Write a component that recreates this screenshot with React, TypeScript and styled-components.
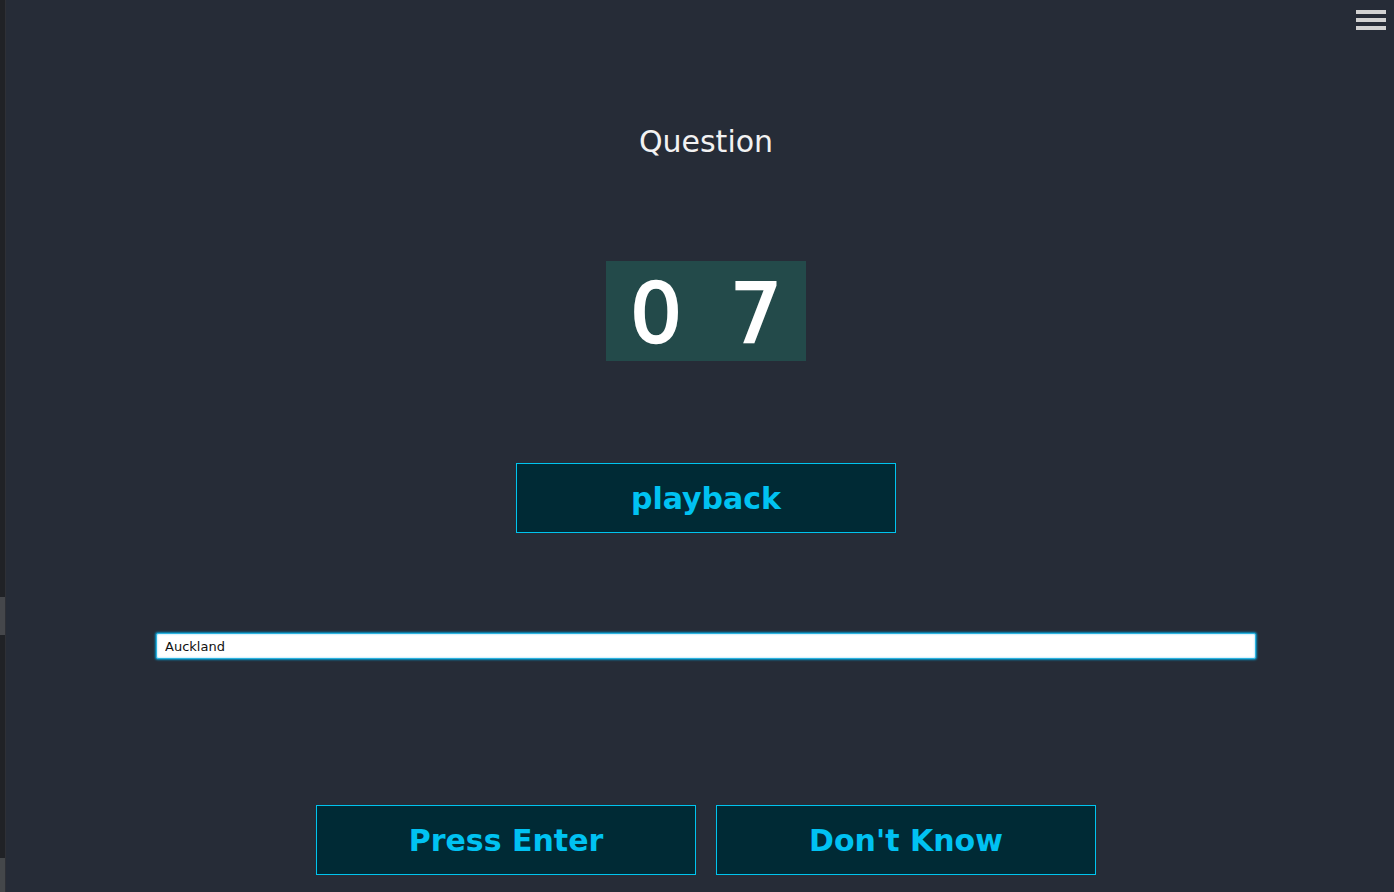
import React from "react";
import styled, { createGlobalStyle } from "styled-components";

const Global = createGlobalStyle`
  html, body { margin: 0; padding: 0; background: #262c37; }
  body { font-family: "DejaVu Sans", "Liberation Sans", sans-serif; overflow: hidden; }
`;

const Page = styled.div`
  display: flex;
  width: 1394px;
  height: 892px;
  background: #262c37;
  position: relative;
`;

const SideStrip = styled.div`
  width: 6px;
  flex: none;
  display: flex;
  flex-direction: column;
  background: #202226;
  border-right: 1px solid #2e3036;
  box-sizing: border-box;
`;

const StripSegment = styled.div<{ $h: number; $c: string }>`
  height: ${(p) => p.$h}px;
  flex: none;
  background: ${(p) => p.$c};
`;

const Main = styled.main`
  flex: 1;
  padding-left: 12px;
  display: flex;
  flex-direction: column;
  align-items: center;
`;

const Title = styled.h1`
  margin: 125px 0 0;
  font-size: 30px;
  font-weight: normal;
  line-height: 34px;
  color: #f2f2f2;
`;

const Counter = styled.div`
  margin-top: 102px;
  display: flex;
  background: #234a4a;
`;

const Digit = styled.span`
  width: 100px;
  height: 100px;
  box-sizing: border-box;
  padding-top: 6px;
  display: flex;
  align-items: center;
  justify-content: center;
  font-size: 82px;
  font-weight: normal;
  line-height: 1;
  color: #ffffff;
  -webkit-text-stroke: 2.5px #ffffff;
`;

const ActionButton = styled.button`
  width: 380px;
  height: 70px;
  box-sizing: border-box;
  background: #002a35;
  border: 1px solid #00c4ee;
  color: #00c2f2;
  font-family: "DejaVu Sans", sans-serif;
  font-weight: bold;
  font-size: 30px;
  padding: 0;
  cursor: pointer;
`;

const PlaybackButton = styled(ActionButton)`
  margin-top: 102px;
`;

const AnswerInput = styled.input`
  margin-top: 100px;
  width: 1100px;
  height: 26px;
  box-sizing: border-box;
  border: 1px solid #2bb3e0;
  border-radius: 2px;
  box-shadow: 0 0 2px 1px rgba(0, 170, 230, 0.8), inset 0 0 2px rgba(0, 160, 230, 0.5);
  background: #ffffff;
  padding: 0 8px;
  font-family: "DejaVu Sans", sans-serif;
  font-size: 13px;
  color: #111;
  outline: none;
`;

const ButtonRow = styled.div`
  margin-top: 146px;
  display: flex;
  gap: 20px;
`;

const Menu = styled.button`
  position: absolute;
  top: 10px;
  right: 8px;
  width: 30px;
  height: 20px;
  padding: 0;
  border: none;
  background: transparent;
  display: flex;
  flex-direction: column;
  justify-content: space-between;
`;

const MenuBar = styled.span`
  display: block;
  height: 4px;
  width: 30px;
  background: #d2d2d2;
`;

export default function App() {
  return (
    <>
      <Global />
      <Page>
        <SideStrip>
          <StripSegment $h={597} $c="#202226" />
          <StripSegment $h={38} $c="#45474b" />
          <StripSegment $h={223} $c="#202226" />
          <StripSegment $h={34} $c="#44474a" />
        </SideStrip>
        <Main>
          <Title>Question</Title>
          <Counter>
            <Digit>0</Digit>
            <Digit>7</Digit>
          </Counter>
          <PlaybackButton>playback</PlaybackButton>
          <AnswerInput defaultValue="Auckland" />
          <ButtonRow>
            <ActionButton>Press Enter</ActionButton>
            <ActionButton>Don't Know</ActionButton>
          </ButtonRow>
        </Main>
        <Menu aria-label="menu">
          <MenuBar />
          <MenuBar />
          <MenuBar />
        </Menu>
      </Page>
    </>
  );
}
